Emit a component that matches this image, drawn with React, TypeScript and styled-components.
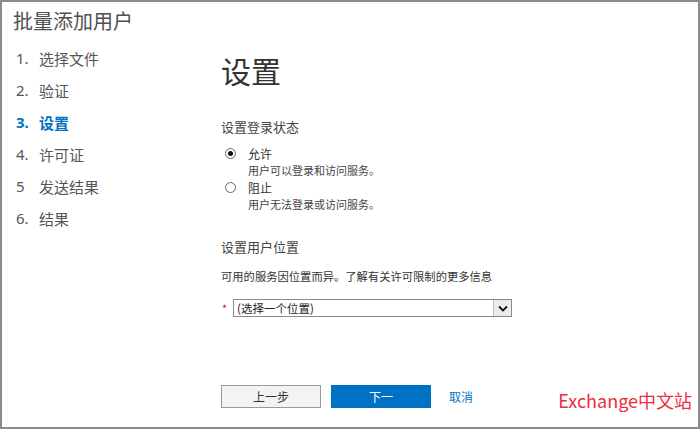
import styled, { createGlobalStyle } from "styled-components";

const GlobalStyle = createGlobalStyle`
  html, body {
    margin: 0;
    padding: 0;
    background: #fff;
  }
  body {
    font-family: "Noto Sans CJK SC", "Noto Sans", sans-serif;
    color: #333;
  }
`;

const Frame = styled.div`
  width: 700px;
  height: 429px;
  box-sizing: border-box;
  border: 2px solid #8c8c8c;
  background: #fff;
  display: flex;
  overflow: hidden;
`;

const Sidebar = styled.div`
  width: 219px;
  flex-shrink: 0;
  box-sizing: border-box;
  padding: 5px 0 0 11px;
  display: flex;
  flex-direction: column;
`;

const WizardTitle = styled.div`
  font-size: 20px;
  line-height: 28px;
  color: #505050;
  margin-bottom: 7px;
`;

const StepList = styled.ol`
  list-style: none;
  margin: 0;
  padding: 0;
`;

const Step = styled.li<{ $active?: boolean }>`
  display: flex;
  height: 32px;
  align-items: center;
  font-size: 15px;
  color: ${(p) => (p.$active ? "#0072c6" : "#555")};
  font-weight: ${(p) => (p.$active ? 700 : 400)};
`;

const StepNo = styled.span`
  width: 23px;
  padding-left: 3px;
  font-family: "Noto Sans", sans-serif;
`;

const Main = styled.div`
  flex: 1;
  display: flex;
  flex-direction: column;
  padding: 50px 0 14px 0;
`;

const Heading = styled.h1`
  margin: 0;
  font-size: 30px;
  line-height: 36px;
  font-weight: 400;
  color: #333;
`;

const SectionLabel = styled.div<{ $top: number }>`
  margin-top: ${(p) => p.$top}px;
  font-size: 13px;
  line-height: 20px;
  color: #444;
`;

const RadioGroup = styled.div`
  margin-top: 8px;
  padding-left: 4px;
  display: flex;
  flex-direction: column;
`;

const RadioRow = styled.label`
  display: flex;
  align-items: center;
  height: 17px;
  font-size: 12px;
  color: #333;
`;

const RadioDot = styled.span<{ $checked?: boolean }>`
  width: 11px;
  height: 11px;
  box-sizing: border-box;
  border: 1px solid #666;
  border-radius: 50%;
  margin-right: 12px;
  display: flex;
  align-items: center;
  justify-content: center;
  &::after {
    content: "";
    width: 5px;
    height: 5px;
    border-radius: 50%;
    background: #111;
    display: ${(p) => (p.$checked ? "block" : "none")};
  }
`;

const RadioHint = styled.div`
  height: 17px;
  line-height: 17px;
  padding-left: 23px;
  font-size: 11px;
  color: #444;
`;

const InfoText = styled.div`
  margin-top: 10px;
  font-size: 11.3px;
  line-height: 18px;
  color: #333;
`;

const SelectRow = styled.div`
  margin-top: 14px;
  display: flex;
  align-items: center;
`;

const Required = styled.span`
  width: 11px;
  font-size: 11px;
  color: #c8102e;
  padding-left: 1px;
`;

const Select = styled.div`
  width: 279px;
  height: 18px;
  box-sizing: border-box;
  border: 1px solid #8a8a8a;
  display: flex;
  align-items: center;
  font-size: 11.5px;
  color: #222;
`;

const SelectText = styled.span`
  flex: 1;
  padding-left: 3px;
`;

const Chevron = styled.span`
  width: 17px;
  height: 16px;
  border-left: 1px solid #bbb;
  background: #ececec;
  display: flex;
  align-items: center;
  justify-content: center;
`;

const Footer = styled.div`
  margin-top: auto;
  display: flex;
  align-items: center;
`;

const Button = styled.button<{ $primary?: boolean }>`
  width: 100px;
  height: 23px;
  margin-right: 10px;
  box-sizing: border-box;
  font-family: "Noto Sans CJK SC", sans-serif;
  font-size: 12px;
  border: 1px solid ${(p) => (p.$primary ? "#0072c6" : "#9a9a9a")};
  background: ${(p) => (p.$primary ? "#0072c6" : "#f3f3f3")};
  color: ${(p) => (p.$primary ? "#fff" : "#333")};
  padding: 0;
`;

const CancelLink = styled.a`
  margin-left: 8px;
  font-size: 12px;
  color: #0072c6;
  text-decoration: none;
`;

const Brand = styled.span`
  margin-left: auto;
  margin-right: 6px;
  margin-top: 8px;
  font-size: 18px;
  color: #ee2c3c;
`;

const steps = ["选择文件", "验证", "设置", "许可证", "发送结果", "结果"];
const numbers = ["1.", "2.", "3.", "4.", "5", "6."];

export default function App() {
  return (
    <>
      <GlobalStyle />
      <Frame>
        <Sidebar>
          <WizardTitle>批量添加用户</WizardTitle>
          <StepList>
            {steps.map((s, i) => (
              <Step key={s + i} $active={i === 2}>
                <StepNo>{numbers[i]}</StepNo>
                {s}
              </Step>
            ))}
          </StepList>
        </Sidebar>
        <Main>
          <Heading>设置</Heading>
          <SectionLabel $top={29}>设置登录状态</SectionLabel>
          <RadioGroup>
            <RadioRow>
              <RadioDot $checked />
              允许
            </RadioRow>
            <RadioHint>用户可以登录和访问服务。</RadioHint>
            <RadioRow>
              <RadioDot />
              阻止
            </RadioRow>
            <RadioHint>用户无法登录或访问服务。</RadioHint>
          </RadioGroup>
          <SectionLabel $top={24}>设置用户位置</SectionLabel>
          <InfoText>可用的服务因位置而异。了解有关许可限制的更多信息</InfoText>
          <SelectRow>
            <Required>*</Required>
            <Select>
              <SelectText>(选择一个位置)</SelectText>
              <Chevron>
                <svg width="10" height="7" viewBox="0 0 10 7">
                  <path d="M1 1.5 L5 5.5 L9 1.5" fill="none" stroke="#111" strokeWidth="1.8" />
                </svg>
              </Chevron>
            </Select>
          </SelectRow>
          <Footer>
            <Button>上一步</Button>
            <Button $primary>下一</Button>
            <CancelLink href="#">取消</CancelLink>
            <Brand>Exchange中文站</Brand>
          </Footer>
        </Main>
      </Frame>
    </>
  );
}
